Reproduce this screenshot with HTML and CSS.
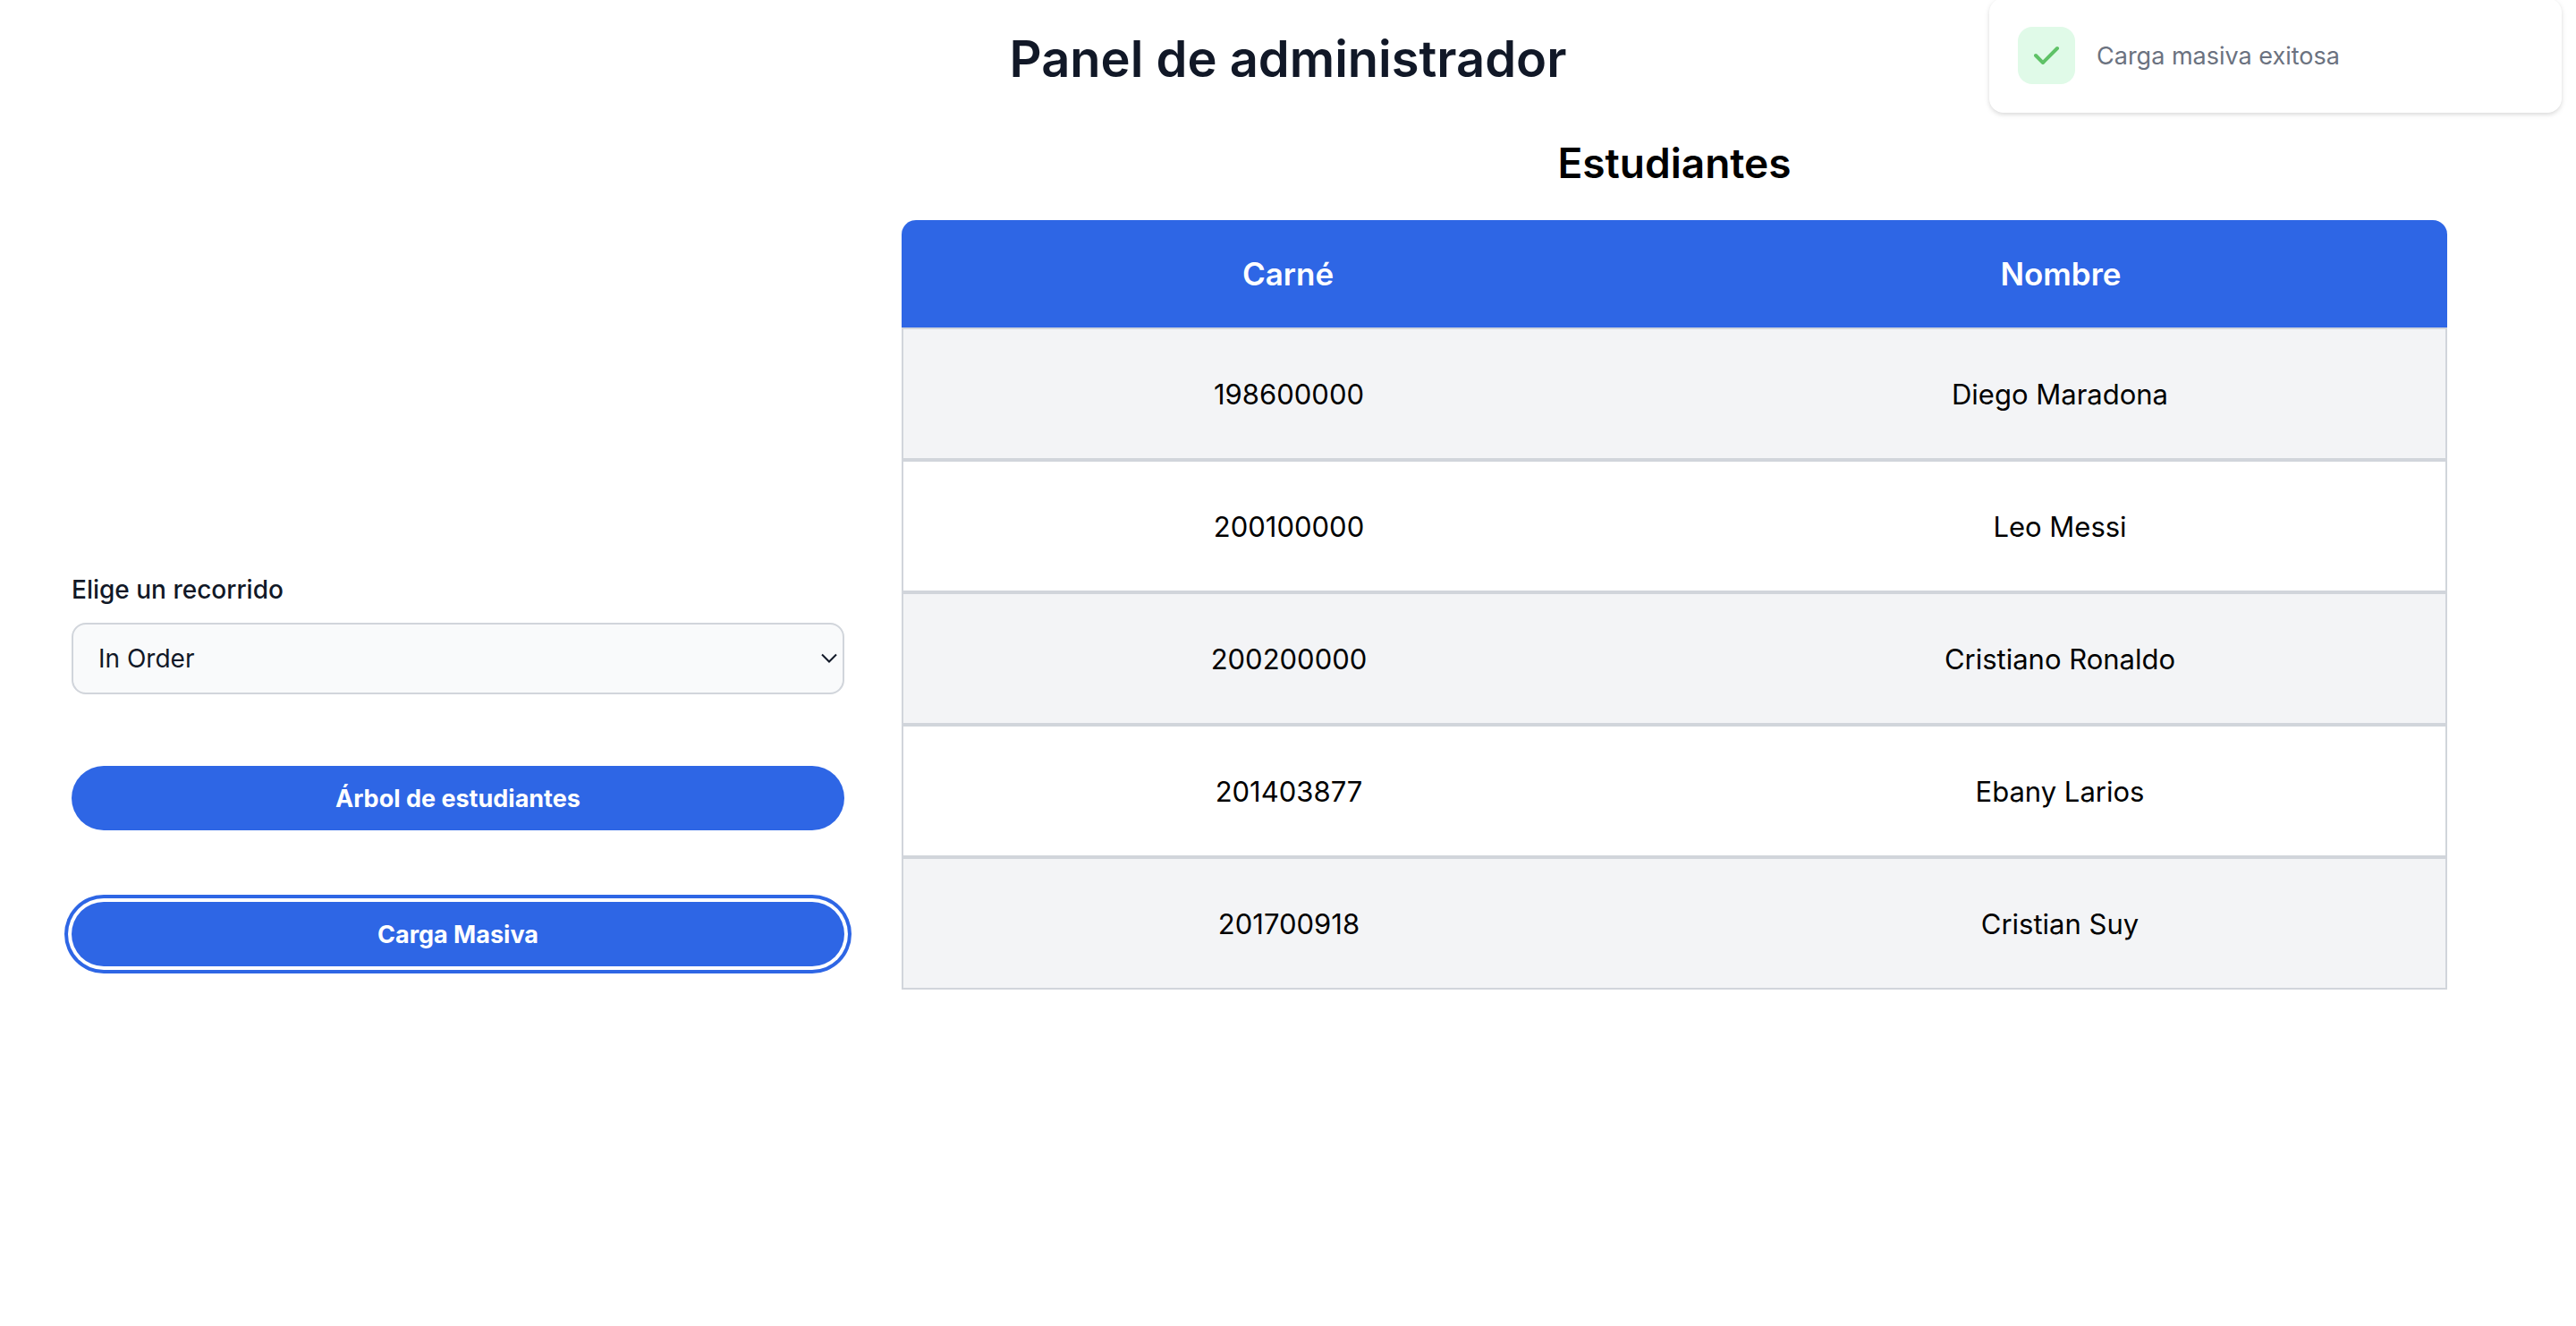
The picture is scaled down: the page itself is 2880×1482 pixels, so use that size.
FILE: index.html
```html
<!DOCTYPE html>
<html lang="es">
<head>
  <meta charset="utf-8">
  <meta name="viewport" content="width=device-width, initial-scale=1">
  <title>Panel de administrador</title>
  <link rel="stylesheet" href="styles.css">
</head>
<body>
  <header class="header">
    <h1 class="title">Panel de administrador</h1>
  </header>

  <main class="layout">
    <form class="controls">
      <div class="field">
        <label class="label" for="recorrido">Elige un recorrido</label>
        <div class="select-wrap">
          <select class="select" id="recorrido" name="recorrido">
            <option selected>In Order</option>
            <option>Pre Order</option>
            <option>Post Order</option>
          </select>
          <svg class="chevron" viewBox="0 0 18 12" aria-hidden="true">
            <path d="M1 1.500 9 9.500 17 1.500"/>
          </svg>
        </div>
      </div>
      <button class="button" type="button">Árbol de estudiantes</button>
      <button class="button button-focused" type="button">Carga Masiva</button>
    </form>

    <section class="students">
      <h2 class="subtitle" id="estudiantes">Estudiantes</h2>
      <table class="table" aria-labelledby="estudiantes">
        <thead>
          <tr><th scope="col">Carné</th><th scope="col">Nombre</th></tr>
        </thead>
        <tbody>
          <tr><td>198600000</td><td>Diego Maradona</td></tr>
          <tr><td>200100000</td><td>Leo Messi</td></tr>
          <tr><td>200200000</td><td>Cristiano Ronaldo</td></tr>
          <tr><td>201403877</td><td>Ebany Larios</td></tr>
          <tr><td>201700918</td><td>Cristian Suy</td></tr>
        </tbody>
      </table>
    </section>
  </main>

  <div class="toast" role="status">
    <span class="toast-icon">
      <svg viewBox="0 0 20 20" aria-hidden="true">
        <path fill-rule="evenodd" clip-rule="evenodd" d="M16.707 5.293a1 1 0 010 1.414l-8 8a1 1 0 01-1.414 0l-4-4a1 1 0 011.414-1.414L8 12.586l7.293-7.293a1 1 0 011.414 0z"/>
      </svg>
    </span>
    <span>Carga masiva exitosa</span>
  </div>
</body>
</html>
```

FILE: styles.css
```css
*,
*::before,
*::after {
  box-sizing: border-box;
}

body {
  margin: 0;
  background: #fff;
  color: #000;
  font-family: Inter, "Liberation Sans", sans-serif;
  font-size: 28px;
}

.header {
  padding: 30px 0 16px;
}

.title {
  margin: 0;
  color: #111827;
  font-size: 56px;
  font-weight: 600;
  line-height: 72px;
  text-align: center;
}

.layout {
  display: grid;
  grid-template-columns: 1fr 2fr;
  column-gap: 64px;
  padding: 0 144px 0 80px;
}

.controls {
  display: flex;
  flex-direction: column;
  gap: 80px;
  padding-top: 520px;
}

.field {
  display: flex;
  flex-direction: column;
  gap: 16px;
}

.label {
  color: #111827;
  font-weight: 500;
  line-height: 42px;
}

.select-wrap {
  display: grid;
  align-items: center;
}

.select-wrap > * {
  grid-area: 1 / 1;
}

.select {
  width: 100%;
  height: 80px;
  padding: 0 40px 0 28px;
  border: 2px solid #d1d5db;
  border-radius: 16px;
  background: #f9fafb;
  color: #111827;
  font: inherit;
  appearance: none;
}

.chevron {
  justify-self: end;
  width: 18px;
  height: 12px;
  margin-right: 8px;
  fill: none;
  stroke: #111827;
  stroke-width: 2;
  pointer-events: none;
}

.button {
  height: 72px;
  padding: 0 32px;
  border: 0;
  border-radius: 36px;
  background: #2e66e5;
  color: #fff;
  font: inherit;
  font-size: 27px;
  font-weight: 700;
}

.button-focused {
  box-shadow: 0 0 0 4px #fff, 0 0 0 8px #2e66e5;
}

.subtitle {
  margin: 0;
  padding: 32px 0;
  font-size: 46px;
  font-weight: 600;
  line-height: 64px;
  text-align: center;
}

.table {
  width: 100%;
  table-layout: fixed;
  border-collapse: separate;
  border-spacing: 0;
  text-align: center;
}

.table th {
  height: 120px;
  padding: 0;
  background: #2e66e5;
  color: #fff;
  font-size: 35px;
  font-weight: 600;
}

.table th:first-child {
  border-top-left-radius: 16px;
}

.table th:last-child {
  border-top-right-radius: 16px;
}

.table td {
  height: 148px;
  padding: 0;
  border: solid #d1d5db;
  border-width: 2px 0;
  font-size: 31px;
}

.table td:first-child {
  border-left-width: 2px;
}

.table td:last-child {
  border-right-width: 2px;
}

.table tbody tr:nth-child(odd) {
  background: #f3f4f6;
}

.toast {
  position: absolute;
  top: -2px;
  right: 16px;
  display: flex;
  align-items: center;
  gap: 24px;
  width: 640px;
  padding: 32px;
  border-radius: 16px;
  background: #fff;
  box-shadow: 0 2px 6px rgba(0, 0, 0, 0.1), 0 2px 4px rgba(0, 0, 0, 0.06);
  color: #6b7280;
  font-size: 27px;
}

.toast-icon {
  display: grid;
  place-items: center;
  width: 64px;
  height: 64px;
  border-radius: 16px;
  background: #e0fae8;
}

.toast-icon svg {
  width: 40px;
  height: 40px;
  fill: #5fc267;
}
```
